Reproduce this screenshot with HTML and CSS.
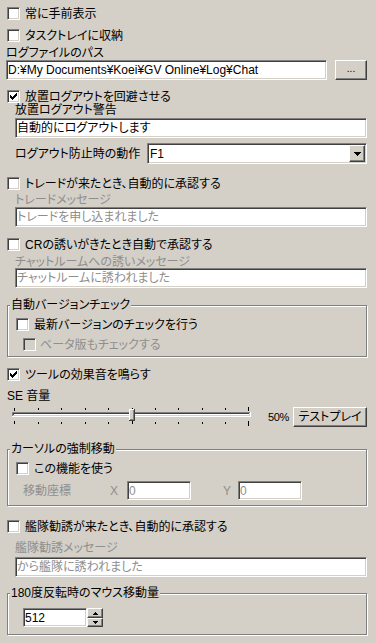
FILE: index.html
```html
<!DOCTYPE html>
<html lang="ja">
<head>
<meta charset="utf-8">
<title>設定</title>
<link rel="stylesheet" href="styles.css">
</head>
<body>
<div class="dlg">
  <div class="cb m-cb1"><span class="box"></span><span class="t">常に手前表示</span></div>
  <div class="cb m-cb2"><span class="box"></span><span class="t">タスクトレイに収納</span></div>
  <div class="lbl m-pathlbl">ログファイルのパス</div>
  <div class="path-row">
    <div class="field path">D:¥My Documents¥Koei¥GV Online¥Log¥Chat</div>
    <div class="btn browse">...</div>
  </div>

  <div class="cb m-cb3"><span class="box"><svg width="9" height="9" viewBox="0 0 9 9" shape-rendering="crispEdges"><path d="M1 3h1v3H1zM2 4h1v3H2zM3 5h1v3H3zM4 4h1v3H4zM5 3h1v3H5zM6 2h1v3H6zM7 1h1v3H7z" fill="#000"/></svg></span><span class="t">放置ログアウトを回避させる</span></div>
  <div class="lbl ind m-l2">放置ログアウト警告</div>
  <div class="field ind wide m-f2">自動的にログアウトします</div>
  <div class="sel-row">
    <span class="sel-lbl">ログアウト防止時の動作</span>
    <div class="select">
      <span class="sel-val">F1</span>
      <span class="btn drop"><svg width="7" height="4" viewBox="0 0 7 4" shape-rendering="crispEdges"><path d="M0 0h7v1H0zM1 1h5v1H1zM2 2h3v1H2zM3 3h1v1H3z" fill="#000"/></svg></span>
    </div>
  </div>

  <div class="cb m-cb4"><span class="box"></span><span class="t">トレードが来たとき、自動的に承認する</span></div>
  <div class="lbl ind dim m-l3">トレードメッセージ</div>
  <div class="field ind wide dimf m-f3">トレードを申し込まれました</div>

  <div class="cb m-cb5"><span class="box"></span><span class="t">CRの誘いがきたとき自動で承認する</span></div>
  <div class="lbl ind dim m-l4">チャットルームへの誘いメッセージ</div>
  <div class="field ind wide dimf m-f4">チャットルームに誘われました</div>

  <div class="group g1">
    <div class="gtitle">自動バージョンチェック</div>
    <div class="cb gin m-g1cb"><span class="box"></span><span class="t">最新バージョンのチェックを行う</span></div>
    <div class="cb gin2 dim m-g1cb2"><span class="box dis"></span><span class="t t4">ベータ版もチェックする</span></div>
  </div>

  <div class="cb m-cb6"><span class="box"><svg width="9" height="9" viewBox="0 0 9 9" shape-rendering="crispEdges"><path d="M1 3h1v3H1zM2 4h1v3H2zM3 5h1v3H3zM4 4h1v3H4zM5 3h1v3H5zM6 2h1v3H6zM7 1h1v3H7z" fill="#000"/></svg></span><span class="t">ツールの効果音を鳴らす</span></div>
  <div class="lbl m-se">SE 音量</div>
  <div class="slider-row">
    <svg class="slider" width="242" height="20" viewBox="0 0 242 20" shape-rendering="crispEdges">
      <rect x="1" y="5" width="238" height="1" fill="#808080"/>
      <rect x="1" y="5" width="1" height="4" fill="#808080"/>
      <rect x="2" y="6" width="236" height="1" fill="#404040"/>
      <rect x="2" y="6" width="1" height="2" fill="#404040"/>
      <rect x="3" y="7" width="235" height="1" fill="#ffffff"/>
      <rect x="2" y="8" width="237" height="1" fill="#d4d0c8"/>
      <rect x="238" y="6" width="1" height="3" fill="#d4d0c8"/>
      <rect x="1" y="9" width="239" height="1" fill="#ffffff"/>
      <rect x="239" y="5" width="1" height="5" fill="#ffffff"/>
      <g fill="#000">
        <rect x="3" y="1" width="1" height="3"/><rect x="3" y="14" width="1" height="3"/>
        <rect x="27" y="1" width="1" height="2"/><rect x="27" y="15" width="1" height="2"/>
        <rect x="50" y="1" width="1" height="2"/><rect x="50" y="15" width="1" height="2"/>
        <rect x="74" y="1" width="1" height="2"/><rect x="74" y="15" width="1" height="2"/>
        <rect x="97" y="1" width="1" height="2"/><rect x="97" y="15" width="1" height="2"/>
        <rect x="121" y="1" width="1" height="3"/><rect x="121" y="14" width="1" height="3"/>
        <rect x="144" y="1" width="1" height="2"/><rect x="144" y="15" width="1" height="2"/>
        <rect x="167" y="1" width="1" height="2"/><rect x="167" y="15" width="1" height="2"/>
        <rect x="191" y="1" width="1" height="2"/><rect x="191" y="15" width="1" height="2"/>
        <rect x="214" y="1" width="1" height="2"/><rect x="214" y="15" width="1" height="2"/>
        <rect x="237" y="0" width="1" height="4"/><rect x="237" y="14" width="1" height="5"/>
      </g>
      <rect x="118" y="2" width="6" height="12" fill="#d4d0c8"/>
      <rect x="118" y="2" width="5" height="1" fill="#ffffff"/>
      <rect x="118" y="2" width="1" height="11" fill="#ffffff"/>
      <rect x="122" y="3" width="1" height="10" fill="#808080"/>
      <rect x="119" y="12" width="4" height="1" fill="#808080"/>
      <rect x="123" y="2" width="1" height="12" fill="#404040"/>
      <rect x="118" y="13" width="6" height="1" fill="#404040"/>
    </svg>
    <span class="pct">50%</span>
    <div class="btn testplay">テストプレイ</div>
  </div>

  <div class="group g2">
    <div class="gtitle">カーソルの強制移動</div>
    <div class="cb gin m-g2cb"><span class="box"></span><span class="t">この機能を使う</span></div>
    <div class="coord-row dim">
      <span class="c-lbl">移動座標</span>
      <span class="c-x">X</span>
      <div class="field cfield dimf">0</div>
      <span class="c-y">Y</span>
      <div class="field cfield dimf">0</div>
    </div>
  </div>

  <div class="cb m-cb7"><span class="box"></span><span class="t">艦隊勧誘が来たとき、自動的に承認する</span></div>
  <div class="lbl ind dim m-l5">艦隊勧誘メッセージ</div>
  <div class="field ind wide dimf m-f5">から艦隊に誘われました</div>

  <div class="group g3">
    <div class="gtitle">180度反転時のマウス移動量</div>
    <div class="spin-row">
      <div class="field spinf">512</div>
      <div class="spin-btns">
        <span class="btn sb"><svg width="5" height="3" viewBox="0 0 5 3" shape-rendering="crispEdges"><path d="M2 0h1v1H2zM1 1h3v1H1zM0 2h5v1H0z" fill="#000"/></svg></span>
        <span class="btn sb"><svg width="5" height="3" viewBox="0 0 5 3" shape-rendering="crispEdges"><path d="M0 0h5v1H0zM1 1h3v1H1zM2 2h1v1H2z" fill="#000"/></svg></span>
      </div>
    </div>
  </div>
</div>
</body>
</html>
```
FILE: styles.css
```css
* { box-sizing: border-box; }
html, body { margin: 0; padding: 0; }
body {
  background: #d4d0c8;
  width: 376px;
  height: 643px;
  overflow: hidden;
  font-family: "Liberation Sans", "Noto Sans CJK JP", sans-serif;
  font-size: 12px;
  line-height: 12px;
  color: #000;
  font-feature-settings: "palt";
}
.dlg { padding: 7px 0 0 7px; }

/* checkbox rows */
.cb { display: flex; align-items: center; height: 13px; white-space: nowrap; }
.cb .t { margin-left: 5px; }
.cb .t4 { margin-left: 4px; }
.box {
  width: 13px; height: 13px; flex: none;
  background: #fff;
  border: 1px solid;
  border-color: #808080 #fff #fff #808080;
  box-shadow: inset 1px 1px #404040, inset -1px -1px #d4d0c8;
  display: flex; align-items: center; justify-content: center;
}
.box svg { display: block; }
.box.dis { background: #d4d0c8; }

.lbl { height: 12px; white-space: nowrap; display: flex; align-items: center; }
.dim { color: #8e8e8e; }
.dimf { color: #8e8e8e; }
.ind { margin-left: 8px; }
.wide { width: 352px; }

/* sunken edit */
.field {
  height: 20px;
  background: #fff;
  border: 1px solid;
  border-color: #808080 #fff #fff #808080;
  box-shadow: inset 1px 1px #404040, inset -1px -1px #d4d0c8;
  padding: 0 1px;
  display: flex; align-items: center;
  white-space: nowrap; overflow: hidden;
}
/* raised button */
.btn {
  background: #d4d0c8;
  border: 1px solid;
  border-color: #fff #404040 #404040 #fff;
  box-shadow: inset -1px -1px #808080;
  display: flex; align-items: center; justify-content: center;
  white-space: nowrap;
}

/* vertical rhythm */
.m-cb2 { margin-top: 9px; }
.m-pathlbl { margin: 5px 0 0 -1px; }
.path-row { display: flex; margin: 1px 0 0 -1px; gap: 8px; }
.path { width: 321px; }
.browse { width: 32px; height: 20px; font-size: 10px; padding-bottom: 3px; }
.m-cb3 { margin-top: 10px; }
.m-l2 { margin-top: 1px; }
.m-f2 { margin-top: 2px; }

.sel-row { display: flex; align-items: center; margin: 5px 0 0 8px; height: 21px; }
.sel-lbl { width: 132px; white-space: nowrap; }
.select {
  width: 220px; height: 21px;
  background: #fff;
  border: 1px solid;
  border-color: #808080 #fff #fff #808080;
  box-shadow: inset 1px 1px #404040, inset -1px -1px #d4d0c8;
  display: flex; align-items: center;
  padding: 1px 1px 1px 2px;
}
.sel-val { flex: 1; }
.drop { width: 16px; height: 17px; }
.drop svg { display: block; }

.m-cb4 { margin-top: 13px; }
.m-l3 { margin-top: 4px; }
.m-f3 { margin-top: 1px; }
.m-cb5 { margin-top: 11px; }
.m-l4 { margin-top: 5px; }
.m-f4 { margin-top: 0; }

/* group boxes */
.group {
  width: 360px;
  border: 1px solid #808080;
  box-shadow: inset 1px 1px #fff, 1px 1px #fff;
}
.gtitle {
  width: fit-content;
  height: 12px;
  margin: -7px 0 0 2px;
  padding: 0 1px;
  background: #d4d0c8;
  white-space: nowrap;
  display: flex; align-items: center;
}
.gin { margin-left: 8px; }
.gin2 { margin-left: 15px; }
.g1 { margin-top: 17px; padding-bottom: 5px; }
.m-g1cb { margin-top: 7px; }
.m-g1cb2 { margin-top: 7px; }

.m-cb6 { margin-top: 11px; }
.m-se { margin-top: 9px; }
.slider-row { display: flex; align-items: center; height: 20px; margin-top: 5px; }
.slider { display: block; margin-left: 4px; flex: none; }
.pct { margin-left: 15px; width: 25px; font-size: 11px; letter-spacing: -0.4px; }
.testplay { width: 74px; height: 20px; }

.g2 { margin-top: 22px; padding-bottom: 5px; }
.m-g2cb { margin-top: 7px; }
.coord-row { display: flex; align-items: center; height: 19px; margin: 6px 0 0 15px; white-space: nowrap; }
.c-lbl { width: 87px; }
.c-x { width: 17px; }
.cfield { width: 64px; height: 19px; }
.c-y { width: 15px; margin-left: 32px; }

.m-cb7 { margin-top: 14px; }
.m-l5 { margin-top: 9px; }
.m-f5 { margin-top: 3px; }

.g3 { margin-top: 16px; padding-bottom: 7px; }
.spin-row { display: flex; margin: 9px 0 0 15px; height: 19px; }
.spinf { width: 64px; height: 19px; }
.spin-btns { display: flex; flex-direction: column; width: 16px; margin-left: 0; }
.sb { height: 10px; width: 16px; }
.sb + .sb { height: 9px; }
.sb svg { display: block; }
```
